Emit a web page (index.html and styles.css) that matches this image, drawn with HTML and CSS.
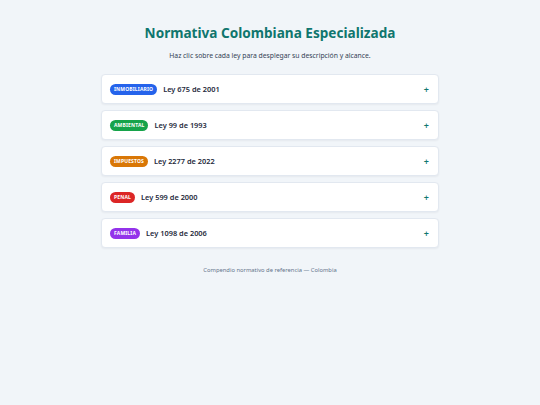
FILE: index.html
```html
<!DOCTYPE html>
<html lang="es">
<head>
    <meta charset="UTF-8">
    <meta name="viewport" content="width=device-width, initial-scale=1.0">
    <title>Normativa Colombiana</title>
    <link rel="stylesheet" href="styles.css">
</head>
<body>

    <div class="wrapper">
        <h1>Normativa Colombiana Especializada</h1>
        <p class="intro">Haz clic sobre cada ley para desplegar su descripción y alcance.</p>

        <div class="laws">
            <div class="law">
                <span class="badge inmobiliario">Inmobiliario</span>
                <span class="law-title">Ley 675 de 2001</span>
                <span class="toggle">+</span>
            </div>
            <div class="law">
                <span class="badge ambiental">Ambiental</span>
                <span class="law-title">Ley 99 de 1993</span>
                <span class="toggle">+</span>
            </div>
            <div class="law">
                <span class="badge impuestos">Impuestos</span>
                <span class="law-title">Ley 2277 de 2022</span>
                <span class="toggle">+</span>
            </div>
            <div class="law">
                <span class="badge penal">Penal</span>
                <span class="law-title">Ley 599 de 2000</span>
                <span class="toggle">+</span>
            </div>
            <div class="law">
                <span class="badge familia">Familia</span>
                <span class="law-title">Ley 1098 de 2006</span>
                <span class="toggle">+</span>
            </div>
        </div>

        <p class="footer">Compendio normativo de referencia — Colombia</p>
    </div>

</body>
</html>
```

FILE: styles.css
```css
body {
    font-family: "Noto Sans", "Open Sans", sans-serif;
    background-color: #f1f5f9;
    color: #1e293b;
    margin: 0;
}

.wrapper {
    width: 338px;
    margin: 0 auto;
    padding-top: 23px;
}

h1 {
    color: #0f766e;
    font-size: 13.6px;
    font-weight: 700;
    text-align: center;
    margin: 0;
    line-height: 20px;
}

.intro {
    font-size: 6.8px;
    color: #334155;
    text-align: center;
    margin: 8px 0 14px;
}

/* Law cards */
.laws {
    display: flex;
    flex-direction: column;
    gap: 6px;
}

.law {
    display: flex;
    align-items: center;
    height: 30px;
    padding: 0 9px 0 8px;
    background: white;
    border: 1px solid #e2e8f0;
    border-radius: 4px;
    box-shadow: 0 1px 2px rgba(15, 23, 42, 0.05);
    box-sizing: border-box;
}

.badge {
    color: white;
    font-size: 5px;
    font-weight: 700;
    text-transform: uppercase;
    letter-spacing: 0.15px;
    padding: 2px 4px;
    border-radius: 6px;
    line-height: 7px;
    margin-right: 6px;
}

.inmobiliario { background-color: #2563eb; }
.ambiental { background-color: #16a34a; }
.impuestos { background-color: #d97706; }
.penal { background-color: #dc2626; }
.familia { background-color: #9333ea; }

.law-title {
    font-size: 7.4px;
    font-weight: 600;
    color: #1e293b;
    flex: 1;
}

.toggle {
    color: #0f766e;
    font-size: 9px;
    font-weight: 600;
}

.footer {
    font-size: 5.8px;
    color: #64748b;
    text-align: center;
    margin-top: 18px;
}
```
